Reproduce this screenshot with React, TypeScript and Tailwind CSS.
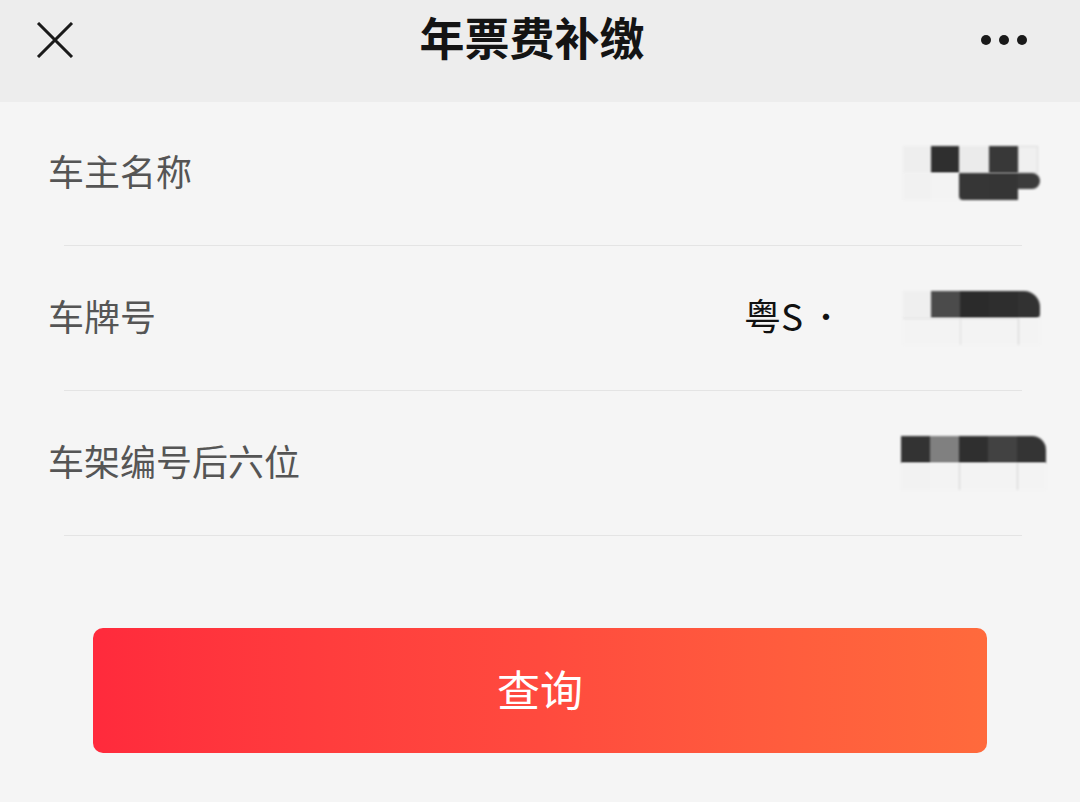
import React from 'react'

const font = { fontFamily: '"Noto Sans CJK SC", "Noto Sans", sans-serif' }

// 打码格子：每行一组颜色
type Cell = { c: string; w: string; round?: string }

function Mosaic({ rows, lines }: { rows: Cell[][]; lines?: boolean }) {
  return (
    <div className="flex flex-col">
      {rows.map((row, i) => (
        <div key={i} className="flex h-[27px] blur-[0.8px]">
          {row.map((cell, j) => (
            <div
              key={j}
              className={`${cell.w} ${cell.c} ${cell.round ?? ''} ${lines && i > 0 && (j === 2 || j === 4) ? 'border-l border-[#d2d2d2]' : ''}`}
            />
          ))}
        </div>
      ))}
    </div>
  )
}

const nameRows: Cell[][] = [
  [
    { c: 'bg-[#eeeeee]', w: 'w-[28px]' },
    { c: 'bg-[#2f2f2f]', w: 'w-[28px]' },
    { c: 'bg-[#ebebeb]', w: 'w-[30px]' },
    { c: 'bg-[#383838]', w: 'w-[29px]' },
    { c: 'bg-[#f0f0f0] border border-[#dcdcdc]', w: 'w-[20px]' },
  ],
  [
    { c: 'bg-[#f1f1f1]', w: 'w-[28px]' },
    { c: 'bg-[#f3f3f3]', w: 'w-[28px]' },
    { c: 'bg-[#363636] rounded-bl-[4px]', w: 'w-[30px]' },
    { c: 'bg-[#353535]', w: 'w-[29px]' },
    { c: 'bg-[#3c3c3c]', w: 'w-[22px]', round: 'rounded-r-[12px] h-[16px]' },
  ],
]

const plateRows: Cell[][] = [
  [
    { c: 'bg-[#efefef]', w: 'w-[28px]' },
    { c: 'bg-[#4b4b4b]', w: 'w-[29px]' },
    { c: 'bg-[#2b2b2b]', w: 'w-[29px]' },
    { c: 'bg-[#2e2e2e]', w: 'w-[29px]' },
    { c: 'bg-[#323232]', w: 'w-[22px]', round: 'rounded-tr-[16px] rounded-br-[4px]' },
  ],
  [
    { c: 'bg-[#f3f3f3] border-t border-[#dddddd]', w: 'w-[28px]' },
    { c: 'bg-[#f3f3f3] border-t border-[#dddddd]', w: 'w-[29px]' },
    { c: 'bg-[#f3f3f3] border-t border-[#dddddd]', w: 'w-[29px]' },
    { c: 'bg-[#f3f3f3] border-t border-[#dddddd]', w: 'w-[29px]' },
    { c: 'bg-[#f3f3f3]', w: 'w-[22px]' },
  ],
]

const vinRows: Cell[][] = [
  [
    { c: 'bg-[#333333]', w: 'w-[29px]' },
    { c: 'bg-[#808080]', w: 'w-[29px]' },
    { c: 'bg-[#2f2f2f]', w: 'w-[29px]' },
    { c: 'bg-[#424242]', w: 'w-[29px]' },
    { c: 'bg-[#343434]', w: 'w-[29px]', round: 'rounded-tr-[14px]' },
  ],
  [
    { c: 'bg-[#f2f2f2]', w: 'w-[29px]' },
    { c: 'bg-[#f3f3f3]', w: 'w-[29px]' },
    { c: 'bg-[#f3f3f3]', w: 'w-[29px]' },
    { c: 'bg-[#f3f3f3]', w: 'w-[29px]' },
    { c: 'bg-[#f3f3f3]', w: 'w-[29px]' },
  ],
]

function Row({ label, children }: { label: string; children?: React.ReactNode }) {
  return (
    <div>
      <div className="h-[144px] flex items-center justify-between pl-[48px] pr-[40px] pb-[6px]">
        <span className="text-[36px] text-[#555555] leading-none">{label}</span>
        <div className="flex items-center">{children}</div>
      </div>
      <div className="ml-[64px] mr-[58px] h-[1px] bg-[#e4e4e4]" />
    </div>
  )
}

export default function App() {
  return (
    <div className="w-[1080px] h-[802px] bg-[#f5f5f5] overflow-hidden" style={font}>
      {/* 顶部导航 */}
      <div className="h-[102px] bg-[#ededed]">
        <div className="h-[80px] flex items-center justify-between pl-[36px] pr-[52px]">
          <div className="w-[48px] flex items-center">
            <svg width="38" height="36" viewBox="0 0 38 36">
              <path d="M2 1 L36 35 M36 1 L2 35" stroke="#1a1a1a" strokeWidth="3" fill="none" />
            </svg>
          </div>
          <div className="flex-1 text-center text-[45px] font-bold text-[#141414] leading-none mb-[8px]">
            年票费补缴
          </div>
          <div className="w-[48px] flex items-center justify-end">
            <svg width="48" height="12" viewBox="0 0 48 12">
              <circle cx="6" cy="6" r="5" fill="#1a1a1a" />
              <circle cx="24" cy="6" r="5" fill="#1a1a1a" />
              <circle cx="42" cy="6" r="5" fill="#1a1a1a" />
            </svg>
          </div>
        </div>
      </div>

      {/* 表单 */}
      <div className="-mt-[1px]">
        <Row label="车主名称">
          <div className="mt-[6px]">
            <Mosaic rows={nameRows} />
          </div>
        </Row>
        <Row label="车牌号">
          <span className="text-[37px] text-[#111] leading-none">粤S</span>
          <span className="text-[30px] text-[#111] leading-none ml-[8px] mr-[62px]">·</span>
          <div className="mt-[6px]">
            <Mosaic rows={plateRows} lines />
          </div>
        </Row>
        <Row label="车架编号后六位">
          <div className="mt-[6px] -mr-[6px]">
            <Mosaic rows={vinRows} lines />
          </div>
        </Row>
      </div>

      {/* 查询按钮 */}
      <div className="px-[93px] pt-[92px]">
        <button className="w-full h-[125px] rounded-[10px] bg-gradient-to-r from-[#ff2a3c] via-[#ff4a3e] to-[#ff6a3c] text-white text-[43px] leading-none pb-[4px]">
          查询
        </button>
      </div>
    </div>
  )
}
